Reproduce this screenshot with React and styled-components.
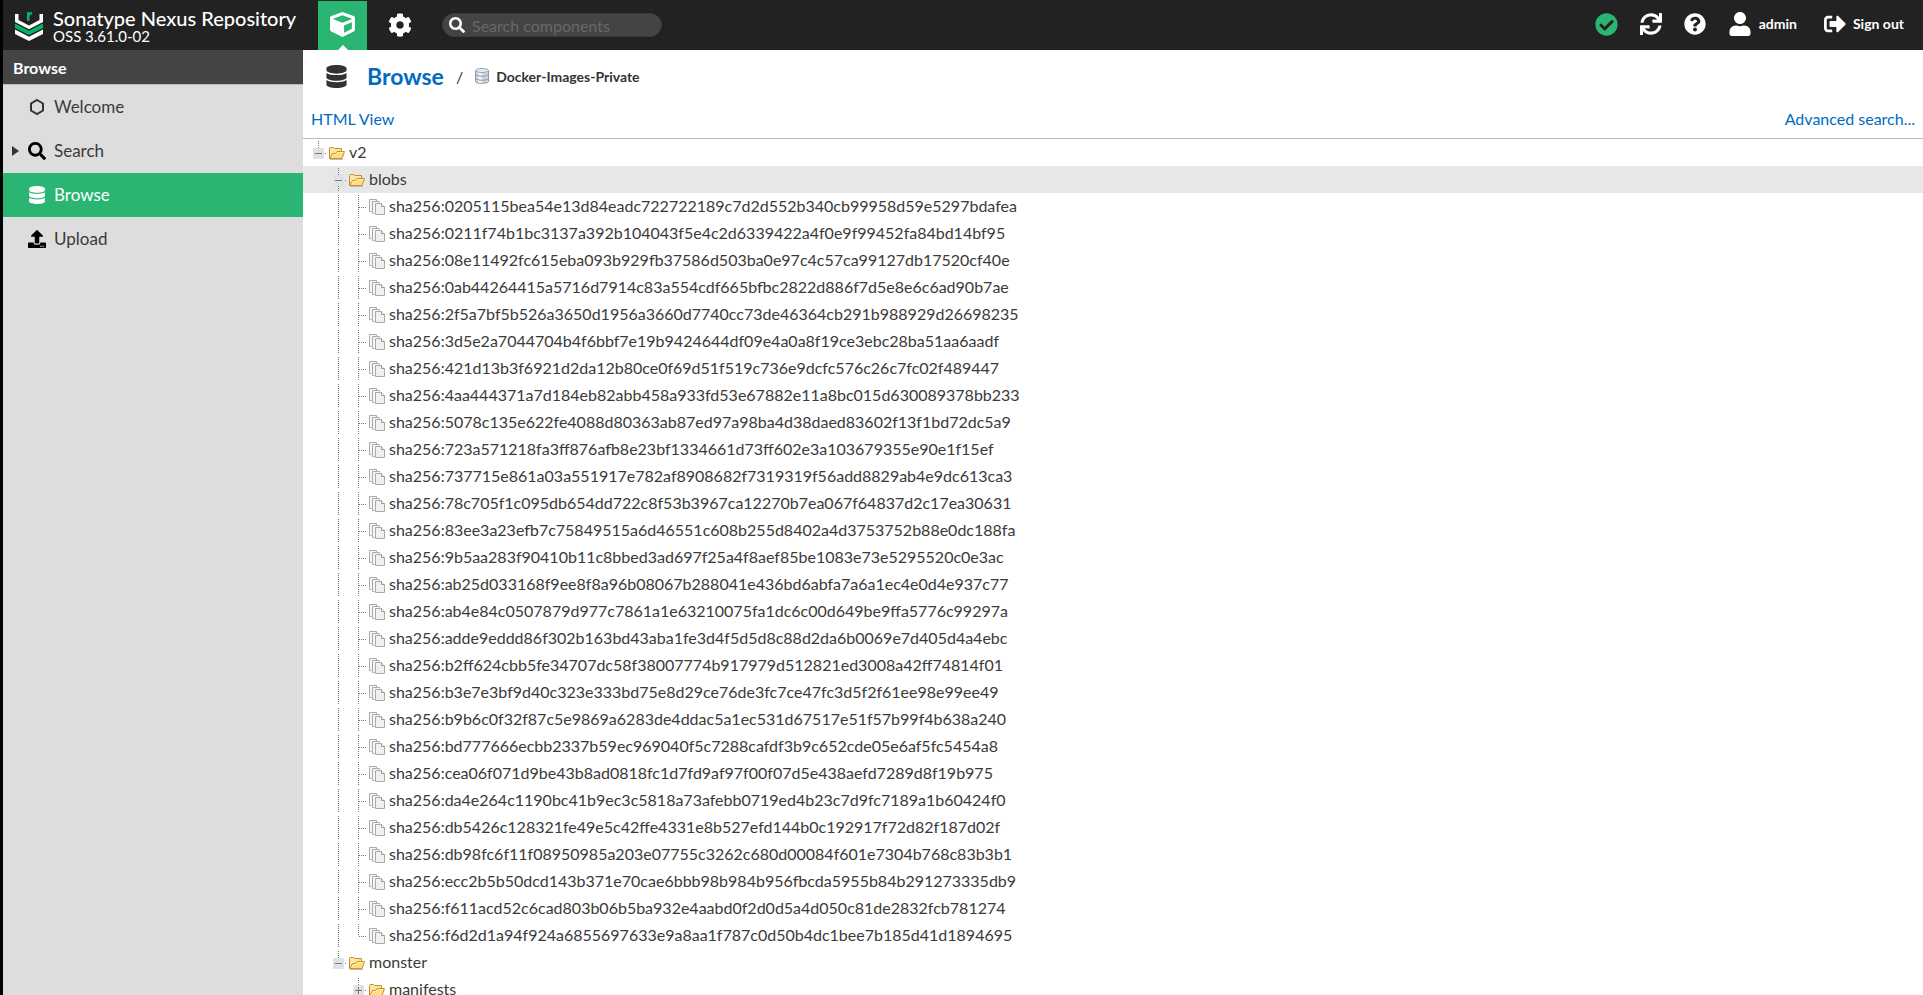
import React from "react";
import styled, { createGlobalStyle } from "styled-components";
import {
	FaCheckCircle,
	FaCog,
	FaCube,
	FaDatabase,
	FaQuestionCircle,
	FaSearch,
	FaSignOutAlt,
	FaSync,
	FaUpload,
	FaUser,
} from "react-icons/fa";

const GlobalStyle = createGlobalStyle`
	:root {
		--green: #2ab573;
		--dark: #222;
		--text: #3a3a3a;
		--link: #006bbf;
	}

	* {
		box-sizing: border-box;
	}

	body {
		margin: 0;
		overflow: hidden;
		color: var(--text);
		font: 16px/20px Lato, "Liberation Sans", sans-serif;
	}

	button {
		padding: 0;
		border: 0;
		background: none;
		color: inherit;
		font: inherit;
		cursor: pointer;
	}

	a {
		color: inherit;
		text-decoration: none;
	}

	svg {
		display: block;
		flex: none;
	}
`;

const Page = styled.div`
	display: flex;
	flex-direction: column;
	height: 100vh;
	border-left: 3px solid #000;
	background: #fff;
`;

const Header = styled.header`
	display: flex;
	flex: none;
	align-items: center;
	height: 50px;
	padding-right: 19px;
	background: var(--dark);
	color: #fff;
`;

const Brand = styled.div`
	display: flex;
	align-items: center;
	gap: 10px;
	width: 315px;
	padding: 2px 0 0 12px;
`;

const Product = styled.div`
	font-size: 20px;
	font-weight: 500;
	line-height: 20px;
	white-space: nowrap;
`;

const Version = styled.div`
	font-size: 15px;
	line-height: 16px;
`;

const ModeButton = styled.button`
	position: relative;
	display: flex;
	align-items: center;
	justify-content: center;
	align-self: flex-end;
	width: 49px;
	height: 49px;
	margin-right: 8px;
	padding-bottom: 2px;
	background: ${(props) => (props.$active ? "var(--green)" : "none")};

	&::after {
		content: "";
		display: ${(props) => (props.$active ? "block" : "none")};
		position: absolute;
		bottom: 0;
		left: 50%;
		margin-left: -5px;
		border: 5px solid transparent;
		border-top: 0;
		border-bottom-color: #fff;
	}
`;

const SearchBox = styled.label`
	display: flex;
	align-items: center;
	gap: 7px;
	width: 220px;
	height: 24px;
	margin-left: 10px;
	padding: 0 6px;
	border: 1px solid #3a3a3a;
	border-radius: 12px;
	background: #444;
`;

const SearchInput = styled.input`
	flex: 1;
	min-width: 0;
	padding: 1px 0 0;
	border: 0;
	outline: 0;
	background: none;
	color: #fff;
	font: inherit;

	&::placeholder {
		color: #686868;
		opacity: 1;
	}
`;

const Actions = styled.div`
	display: flex;
	align-items: center;
	gap: 22px;
	margin-left: auto;
	padding-bottom: 2px;
`;

const Action = styled.button`
	display: flex;
	align-items: center;
	gap: 7px;
	color: ${(props) => props.$color || "#fff"};
	font-size: 14px;
	font-weight: bold;
`;

const SignOut = styled(Action)`
	margin-left: 5px;
`;

const Body = styled.div`
	display: flex;
	flex: 1;
	min-height: 0;
`;

const Sidebar = styled.nav`
	flex: none;
	width: 300px;
	background: #ddd;
`;

const SidebarTitle = styled.h2`
	height: 35px;
	margin: 0;
	padding: 0 10px;
	border-bottom: 1px solid #bbb;
	background: #444;
	color: #fff;
	font-size: 16px;
	line-height: 35px;
`;

const MenuItem = styled.a`
	display: grid;
	grid-template-columns: 25px 26px auto;
	align-items: center;
	height: 44px;
	background: ${(props) => (props.$active ? "var(--green)" : "none")};
	color: ${(props) => (props.$active ? "#fff" : "var(--text)")};
	font-size: 17px;

	svg {
		color: ${(props) => (props.$active ? "#fff" : "#000")};
	}

	svg:first-child {
		justify-self: center;
	}
`;

const Content = styled.main`
	display: flex;
	flex: 1;
	flex-direction: column;
	min-width: 0;
`;

const Breadcrumb = styled.div`
	display: flex;
	flex: none;
	align-items: center;
	height: 54px;
	padding: 0 0 2px 22px;
	color: #333;
`;

const Crumb = styled.a`
	margin-left: 19px;
	color: var(--link);
	font-size: 23px;
	font-weight: bold;
`;

const Slash = styled.span`
	margin: 0 12px;
	padding-top: 2px;
`;

const Repository = styled.span`
	margin-left: 7px;
	padding-top: 2px;
	font-size: 14px;
	font-weight: bold;
`;

const Toolbar = styled.div`
	display: flex;
	flex: none;
	align-items: center;
	justify-content: space-between;
	height: 35px;
	padding: 0 8px 5px;
	border-bottom: 1px solid #bbb;
	color: var(--link);
`;

const Tree = styled.ul`
	flex: 1;
	min-height: 0;
	margin: 0;
	padding: 0;
	overflow: hidden;
	list-style: none;
`;

const TreeRow = styled.li`
	display: flex;
	align-items: center;
	height: 27px;
	padding-left: 6px;
	background: ${(props) => (props.$selected ? "#e7e7e7" : "none")};
	white-space: nowrap;
`;

const Guide = styled.span`
	width: 20px;
`;

const TreeText = styled.span`
	margin-left: 4px;
	padding-bottom: 2px;
`;

const blobs = [
	"0205115bea54e13d84eadc722722189c7d2d552b340cb99958d59e5297bdafea",
	"0211f74b1bc3137a392b104043f5e4c2d6339422a4f0e9f99452fa84bd14bf95",
	"08e11492fc615eba093b929fb37586d503ba0e97c4c57ca99127db17520cf40e",
	"0ab44264415a5716d7914c83a554cdf665bfbc2822d886f7d5e8e6c6ad90b7ae",
	"2f5a7bf5b526a3650d1956a3660d7740cc73de46364cb291b988929d26698235",
	"3d5e2a7044704b4f6bbf7e19b9424644df09e4a0a8f19ce3ebc28ba51aa6aadf",
	"421d13b3f6921d2da12b80ce0f69d51f519c736e9dcfc576c26c7fc02f489447",
	"4aa444371a7d184eb82abb458a933fd53e67882e11a8bc015d630089378bb233",
	"5078c135e622fe4088d80363ab87ed97a98ba4d38daed83602f13f1bd72dc5a9",
	"723a571218fa3ff876afb8e23bf1334661d73ff602e3a103679355e90e1f15ef",
	"737715e861a03a551917e782af8908682f7319319f56add8829ab4e9dc613ca3",
	"78c705f1c095db654dd722c8f53b3967ca12270b7ea067f64837d2c17ea30631",
	"83ee3a23efb7c75849515a6d46551c608b255d8402a4d3753752b88e0dc188fa",
	"9b5aa283f90410b11c8bbed3ad697f25a4f8aef85be1083e73e5295520c0e3ac",
	"ab25d033168f9ee8f8a96b08067b288041e436bd6abfa7a6a1ec4e0d4e937c77",
	"ab4e84c0507879d977c7861a1e63210075fa1dc6c00d649be9ffa5776c99297a",
	"adde9eddd86f302b163bd43aba1fe3d4f5d5d8c88d2da6b0069e7d405d4a4ebc",
	"b2ff624cbb5fe34707dc58f38007774b917979d512821ed3008a42ff74814f01",
	"b3e7e3bf9d40c323e333bd75e8d29ce76de3fc7ce47fc3d5f2f61ee98e99ee49",
	"b9b6c0f32f87c5e9869a6283de4ddac5a1ec531d67517e51f57b99f4b638a240",
	"bd777666ecbb2337b59ec969040f5c7288cafdf3b9c652cde05e6af5fc5454a8",
	"cea06f071d9be43b8ad0818fc1d7fd9af97f00f07d5e438aefd7289d8f19b975",
	"da4e264c1190bc41b9ec3c5818a73afebb0719ed4b23c7d9fc7189a1b60424f0",
	"db5426c128321fe49e5c42ffe4331e8b527efd144b0c192917f72d82f187d02f",
	"db98fc6f11f08950985a203e07755c3262c680d00084f601e7304b768c83b3b1",
	"ecc2b5b50dcd143b371e70cae6bbb98b984b956fbcda5955b84b291273335db9",
	"f611acd52c6cad803b06b5ba932e4aabd0f2d0d5a4d050c81de2832fcb781274",
	"f6d2d1a94f924a6855697633e9a8aa1f787c0d50b4dc1bee7b185d41d1894695",
];

// one string per level: "none", "line", "elbow", "end", "minus", "minus-end" or "plus"
const nodes = [
	{ name: "v2", folder: true, guides: ["minus-end"] },
	{ name: "blobs", folder: true, selected: true, guides: ["none", "minus"] },
	...blobs.map((hash, i) => ({
		name: `sha256:${hash}`,
		guides: ["none", "line", i === blobs.length - 1 ? "end" : "elbow"],
	})),
	{ name: "monster", folder: true, guides: ["none", "minus-end"] },
	{ name: "manifests", folder: true, guides: ["none", "none", "plus"] },
];

const Logo = () => (
	<svg width="28" height="29" viewBox="0 0 28 29">
		<path d="M0 2h3.500v6L14 13.500 24.500 8V2H28v8l-14 7.200L0 10Z" fill="#fff" />
		<path d="m0 11.500 14 7.300 14-7.300V16l-14 7L0 16Z" fill="#00b569" />
		<path d="m0 17.500 14 7.200 14-7.200V22l-14 7L0 22Z" fill="#fff" />
		<path d="M12 0h2.500v1.200Q15.500-.2 17.200.2v2.300q-2.700-.3-2.700 2V9H12Z" fill="#00b569" />
	</svg>
);

const Hexagon = () => (
	<svg width="18" height="18" viewBox="0 0 18 18" fill="none">
		<path d="m9 2 6 3.500v7L9 16l-6-3.500v-7Z" stroke="#333" strokeWidth="2" />
	</svg>
);

const Arrow = () => (
	<svg width="7" height="10" viewBox="0 0 7 10">
		<path d="M0 0 7 5 0 10Z" fill="#333" />
	</svg>
);

const RepositoryIcon = () => (
	<svg width="14" height="16" viewBox="0 0 14 16">
		<path d="M.5 2.500v11C1 16 13 16 13.500 13.500v-11" fill="#ccd5df" stroke="#8f9aa5" />
		<path d="M3 3h4v12q-3 0-4-1Z" fill="#eef2f6" />
		<ellipse cx="7" cy="2.500" rx="6.500" ry="2" fill="#e3e9ef" stroke="#9ba5af" />
		<path d="M.5 6.500c2 2.300 11 2.300 13 0M.5 10.500c2 2.300 11 2.300 13 0" fill="none" stroke="#8f9aa5" />
	</svg>
);

const FolderIcon = () => (
	<svg width="16" height="14" viewBox="0 0 16 14">
		<path d="M.5 12.500V2.500q0-1 1-1h3l1 1h7v3" fill="#fbe7a3" stroke="#c98a2c" />
		<path d="m1 12.500 2.500-5h3l1.500-2h7.500l-2.500 7Z" fill="#ffdd7b" stroke="#cf8f30" />
		<path d="M2.500 11.500 4.500 8.500h3l1.500-2h5" fill="none" stroke="#fff0bd" />
		<path d="M1 13.500h13" stroke="#bbb" />
	</svg>
);

const FilesIcon = () => (
	<svg width="16" height="16" viewBox="0 0 16 16">
		<path d="M2.500 12.500H.5V.5h7v2" fill="#f6f6f6" stroke="#aaa" />
		<path d="M5.500 14.500h-2v-12h7v1" fill="#f6f6f6" stroke="#aaa" />
		<path d="M6.500 4.500h6l3 3v8h-9Z" fill="#f0f0f0" stroke="#aaa" />
		<path d="M12.500 4.500v3h3" fill="#fff" stroke="#999" />
	</svg>
);

const TreeGuide = ({ type }) => {
	if (type === "none") return <Guide />;

	const [kind, end] = type.split("-");
	const toggle = kind === "minus" || kind === "plus";
	const bottom = end || kind === "end" ? 14 : 25;

	const drawing = (
		<svg width="20" height="27" viewBox="0 0 20 27" fill="none" stroke="#777">
			<path d={`M9.500 2V${bottom}`} strokeDasharray="1 1" />
			{kind !== "line" && <path d="M10 14.500h8" strokeDasharray="1 1" />}
			{toggle && <path d="M4 9h11v11H4Z" fill="#dfe1e5" stroke="none" />}
			{toggle && <path d="M6 14.500h7" />}
			{kind === "plus" && <path d="M9.500 11v7" />}
		</svg>
	);

	if (!toggle) return drawing;
	return (
		<button type="button" aria-label={kind === "plus" ? "Expand" : "Collapse"}>
			{drawing}
		</button>
	);
};

const TreeNode = ({ node }) => (
	<TreeRow
		role="treeitem"
		aria-level={node.guides.length}
		aria-selected={!!node.selected}
		$selected={node.selected}
	>
		{node.guides.map((type, i) => (
			<TreeGuide key={i} type={type} />
		))}
		{node.folder ? <FolderIcon /> : <FilesIcon />}
		<TreeText>{node.name}</TreeText>
	</TreeRow>
);

const TopBar = () => (
	<Header>
		<Brand>
			<Logo />
			<div>
				<Product>Sonatype Nexus Repository</Product>
				<Version>OSS 3.61.0-02</Version>
			</div>
		</Brand>
		<ModeButton type="button" aria-label="Browse mode" $active>
			<FaCube size={25} />
		</ModeButton>
		<ModeButton type="button" aria-label="Administration">
			<FaCog size={24} />
		</ModeButton>
		<SearchBox>
			<FaSearch size={16} />
			<SearchInput type="text" aria-label="Search components" placeholder="Search components" />
		</SearchBox>
		<Actions>
			<Action type="button" aria-label="System status" $color="var(--green)">
				<FaCheckCircle size={23} />
			</Action>
			<Action type="button" aria-label="Refresh">
				<FaSync size={22} />
			</Action>
			<Action type="button" aria-label="Help">
				<FaQuestionCircle size={22} />
			</Action>
			<Action type="button">
				<FaUser size={24} />
				admin
			</Action>
			<SignOut type="button">
				<FaSignOutAlt size={22} />
				Sign out
			</SignOut>
		</Actions>
	</Header>
);

const Menu = () => (
	<Sidebar>
		<SidebarTitle>Browse</SidebarTitle>
		<MenuItem href="#welcome">
			<span />
			<Hexagon />
			Welcome
		</MenuItem>
		<MenuItem href="#search">
			<Arrow />
			<FaSearch size={18} />
			Search
		</MenuItem>
		<MenuItem href="#browse" $active>
			<span />
			<FaDatabase size={18} />
			Browse
		</MenuItem>
		<MenuItem href="#upload">
			<span />
			<FaUpload size={18} />
			Upload
		</MenuItem>
	</Sidebar>
);

const App = () => {
	return (
		<Page>
			<GlobalStyle />
			<TopBar />
			<Body>
				<Menu />
				<Content>
					<Breadcrumb>
						<FaDatabase size={23} />
						<Crumb href="#browse">Browse</Crumb>
						<Slash>/</Slash>
						<RepositoryIcon />
						<Repository>Docker-Images-Private</Repository>
					</Breadcrumb>
					<Toolbar>
						<a href="#html">HTML View</a>
						<a href="#advanced">Advanced search...</a>
					</Toolbar>
					<Tree role="tree" aria-label="Repository contents">
						{nodes.map((node) => (
							<TreeNode key={node.name} node={node} />
						))}
					</Tree>
				</Content>
			</Body>
		</Page>
	);
};

export default App;
